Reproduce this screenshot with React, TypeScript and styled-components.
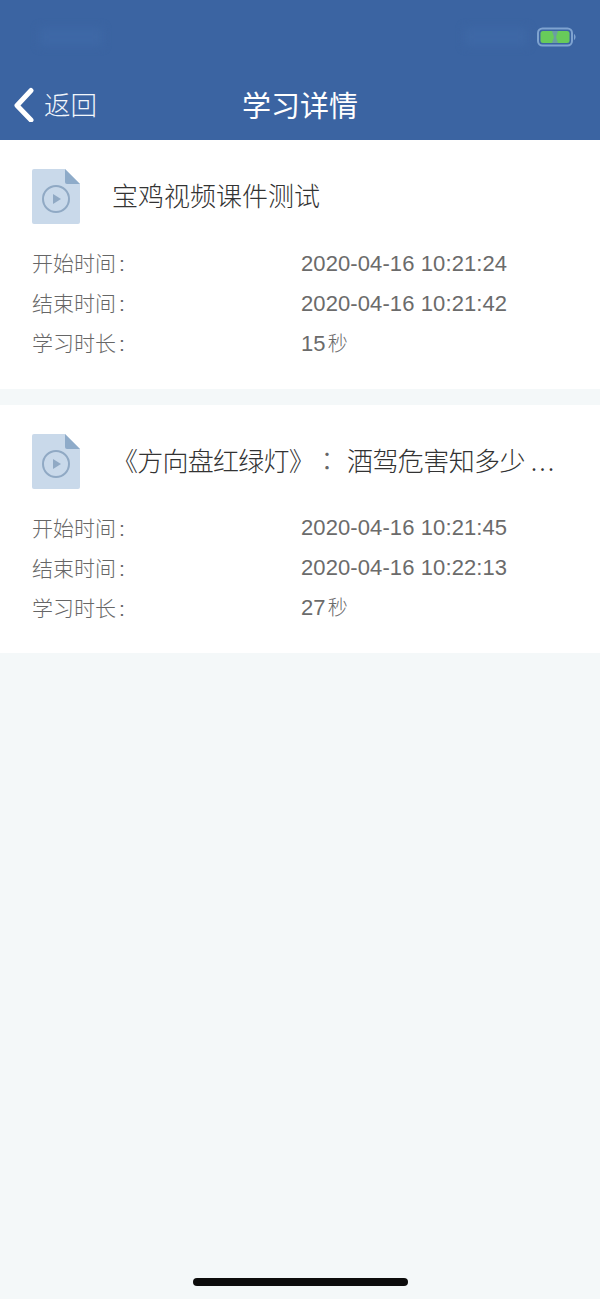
import React from 'react';
import styled, { createGlobalStyle } from 'styled-components';

function LongTitle(): React.ReactElement {
  return (
    <>
      <TitleHead>《方向盘红绿灯》</TitleHead>
      <TitleColon>：</TitleColon>
      <TitleTail>酒驾危害知多少</TitleTail>
      <TitleDots>...</TitleDots>
    </>
  );
}

const records = [
  {
    id: 'baoji',
    title: <>宝鸡视频课件测试</>,
    start: '2020-04-16 10:21:24',
    end: '2020-04-16 10:21:42',
    duration: '15',
  },
  {
    id: 'wheel',
    title: <LongTitle />,
    start: '2020-04-16 10:21:45',
    end: '2020-04-16 10:22:13',
    duration: '27',
  },
];

function FileIcon(): React.ReactElement {
  return (
    <svg width="48" height="55" viewBox="0 0 48 55">
      <path d="M2 0H33L48 15V53a2 2 0 0 1-2 2H2a2 2 0 0 1-2-2V2a2 2 0 0 1 2-2z" fill="#c9d9ea" />
      <path d="M33 0L48 15H35a2 2 0 0 1-2-2z" fill="#8eabc9" />
      <circle cx="24" cy="30" r="13" fill="none" stroke="#90a9c4" strokeWidth="2" />
      <path d="M21 25L29 30L21 35z" fill="#90a9c4" />
    </svg>
  );
}

function Battery(): React.ReactElement {
  return (
    <svg width="40" height="20" viewBox="0 0 40 20">
      <rect x="1" y="1.5" width="34" height="17" rx="4.5" fill="none" stroke="#7fa3d0" strokeWidth="2" />
      <path d="M37 7c2 1 2 5 0 6z" fill="#7fa3d0" />
      <rect x="3.5" y="4" width="29" height="12" rx="2.5" fill="#68cb5a" />
      <path d="M15 4h6l-2 6 2 6h-6l2-6z" fill="#6b9fa0" />
    </svg>
  );
}

function App(): React.ReactElement {
  return (
    <Wrapper>
      <GlobalStyle />
      <Header>
        <StatusBar>
          <Smudge />
          <StatusRight>
            <Smudge />
            <Battery />
          </StatusRight>
        </StatusBar>
        <NavBar>
          <BackButton>
            <svg width="22" height="36" viewBox="0 0 22 36">
              <path d="M18 4.5L4 19.5L18 34" fill="none" stroke="#fff" strokeWidth="5" strokeLinecap="round" strokeLinejoin="round" />
            </svg>
            <BackText>返回</BackText>
          </BackButton>
          <NavTitle>学习详情</NavTitle>
        </NavBar>
      </Header>
      <List>
        {records.map((record) => (
          <Card key={record.id}>
            <TitleRow>
              <FileIcon />
              <CardTitle>{record.title}</CardTitle>
            </TitleRow>
            <Rows>
              <Row>
                <Label>开始时间<LabelColon>:</LabelColon></Label>
                <Value>{record.start}</Value>
              </Row>
              <Row>
                <Label>结束时间<LabelColon>:</LabelColon></Label>
                <Value>{record.end}</Value>
              </Row>
              <Row>
                <Label>学习时长<LabelColon>:</LabelColon></Label>
                <Value>{record.duration}<Unit>秒</Unit></Value>
              </Row>
            </Rows>
          </Card>
        ))}
      </List>
      <HomeIndicator />
    </Wrapper>
  );
}

export default App;

const GlobalStyle = createGlobalStyle`
  body {
    margin: 0;
    background: #f4f8f9;
    font-family: "Noto Sans CJK SC", "Noto Sans", sans-serif;
  }
`;

const Wrapper = styled.div`
  position: relative;
  display: flex;
  flex-direction: column;
  width: 600px;
  height: 1299px;
  overflow: hidden;
  background: #f4f8f9;
`;

const Header = styled.div`
  height: 140px;
  display: flex;
  flex-direction: column;
  background: #3b64a2;
`;

const StatusBar = styled.div`
  height: 74px;
  padding: 0 23px 0 40px;
  display: flex;
  align-items: center;
  justify-content: space-between;
`;

const StatusRight = styled.div`
  display: flex;
  align-items: center;
  gap: 10px;
`;

const Smudge = styled.div`
  width: 62px;
  height: 18px;
  background: #3e68a6;
  filter: blur(4px);
`;

const NavBar = styled.div`
  position: relative;
  height: 60px;
  display: flex;
  align-items: center;
  justify-content: center;
`;

const BackButton = styled.div`
  position: absolute;
  left: 13px;
  top: 12px;
  display: flex;
  align-items: center;
  gap: 9px;
`;

const BackText = styled.span`
  font-size: 26.5px;
  line-height: 36px;
  font-weight: 300;
  color: #f2f6fb;
`;

const NavTitle = styled.div`
  font-size: 29px;
  line-height: 38px;
  color: #fff;
`;

const List = styled.div`
  display: flex;
  flex-direction: column;
  gap: 16px;
`;

const Card = styled.div`
  height: 248.5px;
  box-sizing: border-box;
  padding: 29px 32px 0;
  background: #fff;
`;

const TitleRow = styled.div`
  display: flex;
  align-items: center;
  gap: 33px;
`;

const CardTitle = styled.div`
  margin: -3px 0 0 -1px;
  font-size: 26px;
  line-height: 36px;
  font-weight: 300;
  color: #333;
  white-space: nowrap;
  text-spacing-trim: space-all;
`;

const TitleHead = styled.span`
  letter-spacing: -0.75px;
`;

const TitleColon = styled.span`
  margin-right: 7px;
  font-family: "Noto Sans CJK TC", sans-serif;
  color: #666;
`;

const TitleTail = styled.span`
  letter-spacing: -0.6px;
`;

const TitleDots = styled.span`
  margin-left: 6px;
  letter-spacing: 2px;
`;

const Rows = styled.div`
  margin-top: 19px;
  display: flex;
  flex-direction: column;
`;

const Row = styled.div`
  height: 40px;
  display: flex;
  align-items: center;
`;

const Label = styled.div`
  width: 269px;
  font-size: 21px;
  line-height: 30px;
  font-weight: 300;
  color: #666;
`;

const LabelColon = styled.span`
  margin-left: 3px;
  font-family: "Liberation Sans", sans-serif;
`;

const Value = styled.div`
  padding-top: 1px;
  font-family: "Liberation Sans", "Noto Sans CJK SC", sans-serif;
  font-size: 22px;
  line-height: 30px;
  letter-spacing: 0.1px;
  color: #6b6b6b;
`;

const Unit = styled.span`
  margin-left: 2px;
  font-size: 20px;
  font-weight: 300;
`;

const HomeIndicator = styled.div`
  position: absolute;
  left: 193px;
  bottom: 13px;
  width: 215px;
  height: 8px;
  border-radius: 4px;
  background: #0c0c0c;
`;
